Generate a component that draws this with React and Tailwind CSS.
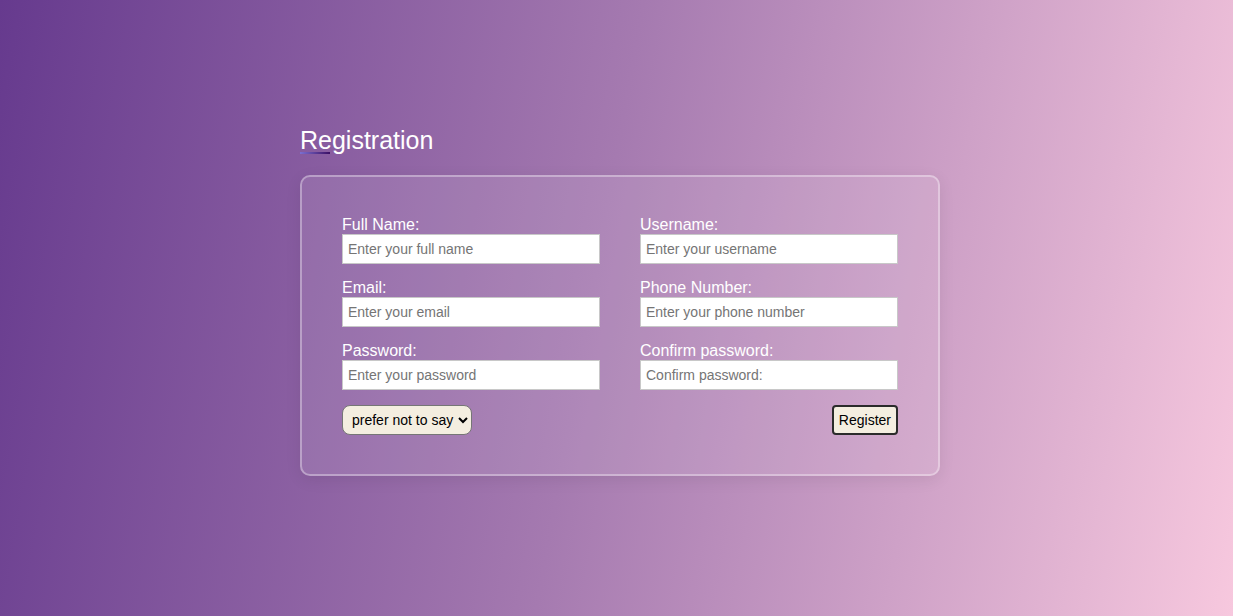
import React from "react";

function Field({ label, placeholder, type = "text" }) {
  return (
    <div className="flex flex-col">
      <label className="text-[16px] leading-[18px] text-white">{label}</label>
      <input
        type={type}
        placeholder={placeholder}
        className="h-[30px] w-full border border-[#c8c8c8] bg-white px-[5px] text-[14px] text-black placeholder:text-[#757575] outline-none"
      />
    </div>
  );
}

export default function App() {
  return (
    <div
      className="min-h-screen w-full bg-[linear-gradient(100deg,#663a8e_0%,#a57ab0_48%,#f7c8de_100%)] flex justify-center pl-[7px] pt-[126px]"
      style={{ fontFamily: '"Liberation Sans", Arial, sans-serif' }}
    >
      <div className="w-[640px] flex flex-col">
        <h2 className="relative text-[25px] leading-[29px] text-white w-fit">
          Registration
          <span className="absolute left-0 top-[26px] h-[2px] w-[30px] bg-[linear-gradient(90deg,#7b6fd0,#3b0f64)]" />
        </h2>
        <form
          className="mt-[20px] rounded-[10px] border-2 border-white/35 bg-white/10 shadow-[0_4px_16px_rgba(0,0,0,0.08)] px-[40px] pt-[39px] pb-[39px]"
          onSubmit={(e) => e.preventDefault()}
        >
          <div className="grid grid-cols-2 gap-x-[40px] gap-y-[15px]">
            <Field label="Full Name:" placeholder="Enter your full name" />
            <Field label="Username:" placeholder="Enter your username" />
            <Field label="Email:" placeholder="Enter your email" type="email" />
            <Field label="Phone Number:" placeholder="Enter your phone number" />
            <Field label="Password:" placeholder="Enter your password" type="password" />
            <Field label="Confirm password:" placeholder="Confirm password:" type="password" />
            <div className="flex items-center">
              <select className="h-[30px] rounded-[8px] border border-[#767676] bg-[#f4eee0] pl-[5px] pr-[1px] text-[14px] text-black">
                <option>prefer not to say</option>
                <option>male</option>
                <option>female</option>
              </select>
            </div>
            <div className="flex items-center justify-end">
              <button
                type="submit"
                className="h-[30px] rounded-[4px] border-2 border-[#2b2b2b] bg-[#f4eee0] px-[5px] text-[14px] text-black"
              >
                Register
              </button>
            </div>
          </div>
        </form>
      </div>
    </div>
  );
}
